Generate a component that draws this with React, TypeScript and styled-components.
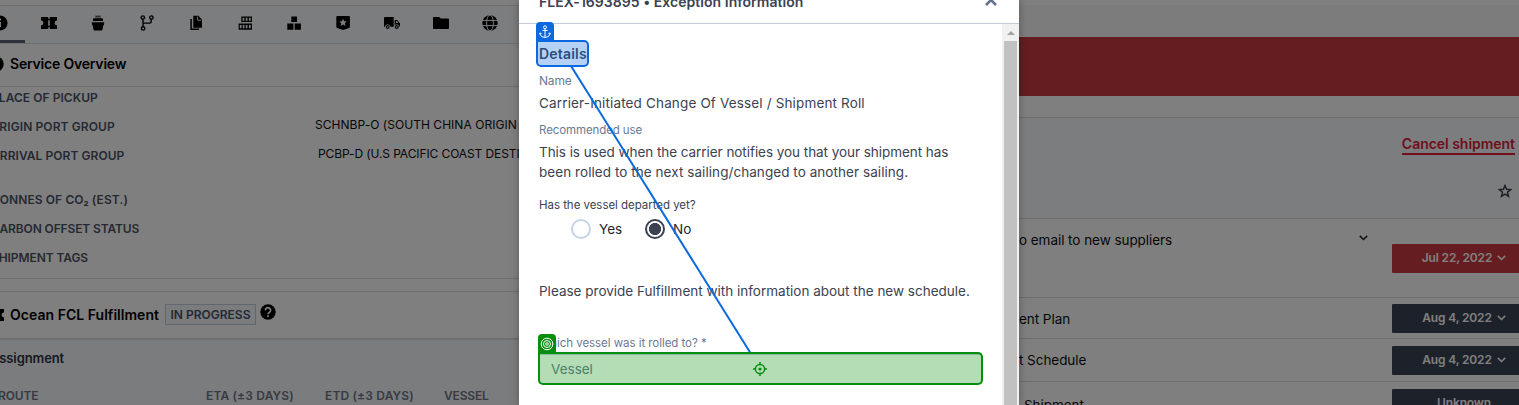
import React from "react";
import styled, { createGlobalStyle } from "styled-components";

const Global = createGlobalStyle`
  * { box-sizing: border-box; }
  body { margin: 0; overflow: hidden; background: #fff; }
`;

const Page = styled.div`
  position: relative;
  display: flex;
  justify-content: space-between;
  width: 1519px;
  height: 405px;
  overflow: hidden;
  background: #fff;
  font-family: Inter, "Liberation Sans", sans-serif;
  color: #0b0d12;
`;

/* Text run: size, weight, tracking and colour vary by use */
const Text = styled.span<{ $size?: number; $weight?: number; $track?: number; $color?: string }>`
  font-size: ${(p) => p.$size ?? 13.5}px;
  font-weight: ${(p) => p.$weight ?? 400};
  letter-spacing: ${(p) => p.$track ?? 0}px;
  color: ${(p) => p.$color ?? "inherit"};
  white-space: nowrap;
`;

const LeftPanel = styled.section`
  width: 519px;
  height: 405px;
  overflow: hidden;
  display: flex;
  flex-direction: column;
`;

const Tabs = styled.nav`
  margin-top: 5px;
  height: 39px;
  flex: none;
  display: flex;
  background: #f9fafd;
  border-top: 1px solid #dcdddf;
  border-bottom: 1px solid #dcdddf;
`;

const Tab = styled.div<{ $active?: boolean }>`
  width: 49px;
  flex: none;
  display: flex;
  justify-content: center;
  padding: 9px 2px 0 0;
  border-bottom: ${(p) => (p.$active ? "3px solid #5b6477" : "0")};
  color: #000;
  &:first-child { margin-left: -24px; }
`;

const SectionHead = styled.header<{ $height: number; $lift?: number }>`
  height: ${(p) => p.$height}px;
  flex: none;
  display: flex;
  align-items: center;
  padding-bottom: ${(p) => p.$lift ?? 0}px;
  border-bottom: 1px solid #dcdddf;
  color: #000;
`;

const HeadIcon = styled.span`
  width: 10px;
  display: flex;
  justify-content: flex-end;
  padding-right: 6px;
  flex: none;
  svg { flex: none; }
`;

const Facts = styled.div`
  height: 192px;
  flex: none;
  border-bottom: 1px solid #dcdddf;
`;

const Fact = styled.div<{ $height?: number; $indent: number }>`
  display: flex;
  height: ${(p) => p.$height ?? 29}px;
  line-height: 18px;
  margin-left: ${(p) => -p.$indent}px;
`;

const FactLabel = styled.div<{ $width: number }>`
  width: ${(p) => p.$width}px;
  flex: none;
  white-space: nowrap;
`;

const FactValue = styled.div`
  white-space: nowrap;
  margin-top: -2px;
`;

const Gap = styled.div`
  height: 12px;
  flex: none;
  border-bottom: 1px solid #dcdddf;
  box-sizing: content-box;
`;

const Badge = styled.span`
  display: flex;
  align-items: center;
  justify-content: center;
  width: 91px;
  height: 21px;
  margin: 0 4px 0 6px;
  border: 1px solid #c3cfdf;
  background: #f6f8fb;
`;

const HelpSlot = styled.span`
  line-height: 0;
  margin-top: -6px;
`;

const Assignment = styled.div`
  flex: 1;
  background: #f6f8fc;
  border-top: 1px solid #dcdfe6;
  line-height: 20px;
`;

const AssignTitle = styled.div`
  padding-top: 7px;
  margin-left: -10px;
  height: 46px;
`;

const Columns = styled.div`
  display: grid;
  grid-template-columns: 208px 119px 119px auto;
  margin-left: -2px;
`;

const RightPanel = styled.section`
  width: 500px;
  height: 405px;
  display: flex;
  flex-direction: column;
`;

const TopStrip = styled.div`
  height: 37px;
  flex: none;
  background: linear-gradient(#fff 5px, #f9f9f9 5px);
`;

const Alert = styled.div`
  height: 59px;
  flex: none;
  background: #cb3b42;
`;

const Actions = styled.div`
  margin-top: 21px;
  height: 102px;
  flex: none;
  display: flex;
  flex-direction: column;
  align-items: flex-end;
  padding: 16px 4px 0 0;
  background: #f9fafd;
  border-top: 1px solid #dcdddf;
  border-bottom: 1px solid #dcdddf;
`;

const Cancel = styled.a`
  height: 21px;
  line-height: 19px;
  border-bottom: 2px solid #e0213a;
  color: #e0213a;
`;

const StarSlot = styled.div`
  margin: 29px 3px 0 0;
  height: 14px;
  line-height: 0;
`;

const Task = styled.div<{ $height: number }>`
  height: ${(p) => p.$height}px;
  flex: none;
  display: flex;
  border-bottom: 1px solid #dcdddf;
`;

const TaskName = styled.div<{ $indent?: number; $top: number }>`
  width: 340px;
  flex: none;
  padding: ${(p) => p.$top}px 0 0 ${(p) => p.$indent ?? 0}px;
  line-height: 20px;
`;

const Toggle = styled.div`
  width: 33px;
  flex: none;
  padding-top: 16px;
  line-height: 0;
`;

const DateButton = styled.button<{ $late?: boolean; $top: number }>`
  width: 143px;
  height: 29px;
  flex: none;
  margin: ${(p) => p.$top}px 0 0 auto;
  border: 0;
  border-radius: 1px;
  padding: 0 0 2px 1px;
  display: flex;
  align-items: center;
  justify-content: center;
  gap: 5px;
  background: ${(p) => (p.$late ? "#cb3b42" : "#3b4252")};
  color: #fff;
  font-family: inherit;
`;

const TaskList = styled.div`
  width: 516px;
  flex: none;
`;

const Overlay = styled.div`
  position: absolute;
  inset: 0;
  background: rgba(0, 0, 0, 0.5);
`;

const Modal = styled.div`
  position: absolute;
  left: 519px;
  top: 0;
  width: 500px;
  height: 405px;
  display: flex;
  flex-direction: column;
  background: #fff;
  color: #3b4252;
  box-shadow: 0 0 8px rgba(0, 0, 0, 0.3);
`;

const ModalHead = styled.header`
  height: 24px;
  flex: none;
  display: flex;
  justify-content: space-between;
  border-bottom: 1px solid #c2cdda;
  padding: 0 22px 0 20px;
  line-height: 20px;
`;

const Raised = styled.div`
  margin-top: -9px;
  line-height: 20px;
`;

const CloseSlot = styled.div`
  margin-top: -6px;
  line-height: 0;
`;

const ModalMain = styled.div`
  flex: 1;
  display: flex;
  justify-content: space-between;
`;

const Form = styled.div`
  width: 463px;
  padding: 19px 0 0 20px;
`;

const Line = styled.div<{ $top: number; $height?: number }>`
  margin-top: ${(p) => p.$top}px;
  height: ${(p) => p.$height ?? 20}px;
  line-height: ${(p) => p.$height ?? 20}px;
  white-space: nowrap;
`;

const Radios = styled.div`
  display: flex;
  align-items: center;
  margin: 7px 0 0 32px;
  height: 20px;
`;

const Radio = styled.span<{ $on?: boolean }>`
  width: 20px;
  height: 20px;
  margin-right: 8px;
  border-radius: 50%;
  border: 2px solid ${(p) => (p.$on ? "#3b4252" : "#c7d3e8")};
  background: ${(p) => (p.$on ? "radial-gradient(circle, #3b4252 5.7px, #fff 6.4px)" : "#fff")};
`;

const RadioLabel = styled.label`
  width: 46px;
  line-height: 20px;
  margin-top: -2px;
  color: #23272f;
`;

const Field = styled.div`
  margin-top: 3px;
  height: 31px;
  width: 443px;
  border: 1px solid #c2cdda;
  border-top-width: 2px;
  padding-left: 11px;
  line-height: 27px;
`;

const Scrollbar = styled.div`
  width: 17px;
  background: #f1f1f1;
  display: flex;
  flex-direction: column;
  align-items: center;
`;

const Arrow = styled.div`
  margin: 7px 0 6px;
  border: 4px solid transparent;
  border-top: 0;
  border-bottom: 4px solid #a3a3a3;
`;

const Thumb = styled.div`
  flex: 1;
  width: 13px;
  background: #c1c1c1;
`;

const Highlight = styled.div<{ $x: number; $y: number; $w: number; $h: number; $tone: string; $fill: string }>`
  position: absolute;
  left: ${(p) => p.$x}px;
  top: ${(p) => p.$y}px;
  width: ${(p) => p.$w}px;
  height: ${(p) => p.$h}px;
  border: 2px solid ${(p) => p.$tone};
  border-radius: 0 5px 5px 5px;
  background: ${(p) => p.$fill};
  display: flex;
  align-items: center;
  justify-content: center;
`;

const Tag = styled.div<{ $tone: string }>`
  position: absolute;
  left: -2px;
  top: -20px;
  width: 18px;
  height: 19px;
  border-radius: 4px 4px 0 0;
  background: ${(p) => p.$tone};
  display: flex;
  align-items: center;
  justify-content: center;
`;

const Connector = styled.svg`
  position: absolute;
  inset: 0;
`;

const Svg = ({ children, size = 16 }: { children: React.ReactNode; size?: number }) => (
  <svg width={size} height={size} viewBox="0 0 16 16" fill="currentColor">{children}</svg>
);

const InfoIcon = () => (
  <Svg>
    <circle cx="8" cy="8" r="7.6" />
    <path d="M7 3.6h2v2H7zM7 7h2v5.2H7z" fill="#f9fafd" />
  </Svg>
);

const TicketIcon = () => (
  <Svg>
    <path d="M0 2h16v3.600a2.400 2.400 0 0 0 0 4.800V14H0v-3.600a2.400 2.400 0 0 0 0-4.800z" />
    <path d="M7.200 2h1.600v1.800H7.200zM7.200 5.200h1.600v5.600H7.200zM7.200 12.200h1.600V14H7.200z" fill="#f9fafd" />
  </Svg>
);

const ShipIcon = () => (
  <Svg>
    <path d="M5.3.6h5.4v2H5.300z" opacity=".6" />
    <path d="M3.8 3.2h8.4a.8.8 0 0 1 .8.8v2H3V4a.8.8 0 0 1 .8-.8zM1.700 7.200h12.600l-.4 2.400a1 1 0 0 1-.6.8l-.7 3.800a1.600 1.600 0 0 1-1.600 1.400H5a1.600 1.600 0 0 1-1.600-1.400l-.7-3.800a1 1 0 0 1-.6-.8z" />
  </Svg>
);

const BranchIcon = () => (
  <Svg>
    <g fill="none" stroke="currentColor" strokeWidth="1.4">
      <circle cx="3.8" cy="2.6" r="1.7" />
      <circle cx="12.4" cy="2.6" r="1.7" />
      <circle cx="4.1" cy="13.4" r="1.7" />
      <path d="M4 4.300v7.400M12.200 4.300v2.300q0 1.500-1.500 1.500H4" />
    </g>
  </Svg>
);

const CopyIcon = () => (
  <Svg>
    <path d="M2.300 4h1.500v9.600H11V15H2.300z" />
    <path d="M5.300.8h5L14 4.500v8.200H5.300z" />
    <path d="M9.600 1.600v3.600h3.600" fill="none" stroke="#f9fafd" strokeWidth=".9" />
  </Svg>
);

const ContainersIcon = () => (
  <Svg>
    <path fillRule="evenodd" d="M4.300 1.400H15V7H4.300zM5.600 2.700v3h1.700v-3zM8.700 2.700v3h1.800v-3zM11.900 2.700v3h1.800v-3zM1.600 8.500H15v6.200H1.600zM2.800 9.900v3.300h1.800V9.900zM5.800 9.900v3.300h1.700V9.900zM8.800 9.900v3.300h1.700V9.900zM11.900 9.900v3.300h1.800V9.900z" />
  </Svg>
);

const BoxesIcon = () => (
  <Svg><path d="M5.300 1.600H11V7H5.300zM1.300 8.500h6.100v6.200H1.300zM8.700 8.500h6.200v6.200H8.700z" /></Svg>
);

const ShieldIcon = () => (
  <Svg>
    <path d="M2.300 1h11.600q1 0 1 1v9.800q0 .8-.8 1.100L8.100 15l-6-2.100q-.8-.3-.8-1.100V2q0-1 1-1z" />
    <path d="m8.100 3.700 1.100 2.500 2.700.3-2 1.800.6 2.700-2.400-1.400L5.700 11l.6-2.700-2-1.800 2.700-.3z" fill="#f9fafd" />
  </Svg>
);

const TruckIcon = () => (
  <Svg>
    <path d="M1 2h8.700v9.800H0V3a1 1 0 0 1 1-1zM10.700 5h2.600L16 8.400v3.400h-5.300z" />
    <circle cx="3.700" cy="12" r="2.300" stroke="#f9fafd" strokeWidth=".8" />
    <circle cx="12.800" cy="12" r="2.300" stroke="#f9fafd" strokeWidth=".8" />
    <circle cx="3.700" cy="12" r=".8" fill="#f9fafd" />
    <circle cx="12.800" cy="12" r=".8" fill="#f9fafd" />
    <path d="M12 6.100h1l1.400 1.900H12z" fill="#f9fafd" />
  </Svg>
);

const FolderIcon = () => (
  <Svg><path d="M.8 2h5.400l1.600 1.600h7.400q.8 0 .8.800v8.800q0 .8-.8.800H.8q-.8 0-.8-.8V2.800Q0 2 .8 2z" /></Svg>
);

const GlobeIcon = () => (
  <Svg>
    <circle cx="8" cy="8" r="7.700" />
    <g fill="none" stroke="#f9fafd" strokeWidth="1">
      <ellipse cx="8" cy="8" rx="3.400" ry="8" />
      <path d="M0 5.400h16M0 10.600h16" />
    </g>
  </Svg>
);

const HelpIcon = () => (
  <Svg>
    <circle cx="8" cy="8" r="7.700" />
    <path d="M5.400 6.300a2.600 2.600 0 1 1 4 2.100C8.400 9 8 9.300 8 10.200M8 11.300v1.700" fill="none" stroke="#fff" strokeWidth="1.700" />
  </Svg>
);

const StarIcon = () => (
  <svg width="14" height="14" viewBox="0 0 14 14" fill="none" stroke="#3b4252" strokeWidth="1.500">
    <path d="m7 1.600 1.600 3.700 4 .3-3.100 2.700 1 4L7 10.100l-3.500 2.200 1-4L1.400 5.600l4-.3z" />
  </svg>
);

const Chevron = ({ color = "currentColor" }: { color?: string }) => (
  <svg width="9" height="6" viewBox="0 0 9 6" fill="none" stroke={color} strokeWidth="1.600">
    <path d="M.8.900 4.500 4.500 8.200.900" />
  </svg>
);

const AnchorIcon = () => (
  <svg width="12" height="14" viewBox="0 0 12 14" fill="none" stroke="#fff" strokeWidth="1">
    <circle cx="6" cy="2.300" r="1.500" />
    <path d="M6 3.800v8.700M3.500 5.500h5M1.200 8v1.200Q1.700 12.300 6 12.500q4.300-.2 4.800-3.300V8M.4 9.300l.9-1.500 1.200 1.200M11.600 9.300l-.9-1.500L9.500 9" />
  </svg>
);

const TargetIcon = () => (
  <svg width="14" height="14" viewBox="0 0 14 14" fill="none" stroke="#fff" strokeWidth="1">
    <circle cx="7" cy="7" r="5.800" />
    <circle cx="7" cy="7" r="3.500" />
    <circle cx="7" cy="7" r="1.300" />
  </svg>
);

const CrosshairIcon = () => (
  <svg width="14" height="14" viewBox="0 0 14 14" fill="none" stroke="#068f0e" strokeWidth="1.500">
    <circle cx="7" cy="7" r="4.600" />
    <circle cx="7" cy="7" r="1.600" fill="#068f0e" stroke="none" />
    <path d="M7 0v2.600M7 11.400V14M0 7h2.600M11.400 7H14" />
  </svg>
);

const CrosshairSlot = styled.span`
  line-height: 0;
  margin-right: 2px;
`;

const tabIcons = [InfoIcon, TicketIcon, ShipIcon, BranchIcon, CopyIcon, ContainersIcon, BoxesIcon, ShieldIcon, TruckIcon, FolderIcon, GlobeIcon];

const facts = [
  { label: "PLACE OF PICKUP", indent: 9, track: 0.05 },
  { label: "ORIGIN PORT GROUP", indent: 10, track: 0.1, value: "SCHNBP-O (SOUTH CHINA ORIGIN", at: 315, valueTrack: 0.04 },
  { label: "ARRIVAL PORT GROUP", indent: 9, track: 0.05, value: "PCBP-D (U.S PACIFIC COAST DESTI", at: 318, valueTrack: -0.1, height: 44 },
  { label: "TONNES OF CO₂ (EST.)", indent: 8, track: 0.1 },
  { label: "CARBON OFFSET STATUS", indent: 9, track: -0.12 },
  { label: "SHIPMENT TAGS", indent: 9, track: -0.08 },
];

const tasks = [
  { name: "o email to new suppliers", height: 79, top: 10, date: "Jul 22, 2022", btn: 25, late: true, toggle: true },
  { name: "ent Plan", height: 41, top: 10, date: "Aug 4, 2022", btn: 6 },
  { name: "t Schedule", height: 43, top: 10, date: "Aug 4, 2022", btn: 7 },
  { name: "Shipment", height: 43, top: 12, date: "Unknown", btn: 7, indent: 5 },
];

const BLUE = "#0a69e0";
const GREEN = "#068f0e";

export default function App() {
  return (
    <>
      <Global />
      <Page>
        <LeftPanel>
          <Tabs>
            {tabIcons.map((Icon, i) => (
              <Tab key={i} $active={i === 0}><Icon /></Tab>
            ))}
          </Tabs>
          <SectionHead $height={43} $lift={3}>
            <HeadIcon><Svg><circle cx="8" cy="8" r="7.700" /></Svg></HeadIcon>
            <Text $size={14} $weight={600} $track={-0.2}>Service Overview</Text>
          </SectionHead>
          <Facts>
            {facts.map((f) => (
              <Fact key={f.label} $indent={f.indent} $height={f.height}>
                <FactLabel $width={f.indent + (f.at ?? 300)}>
                  <Text $size={12} $weight={600} $track={f.track} $color="#4b5366">{f.label}</Text>
                </FactLabel>
                {f.value && <FactValue><Text $size={12} $track={f.valueTrack}>{f.value}</Text></FactValue>}
              </Fact>
            ))}
          </Facts>
          <Gap />
          <SectionHead $height={47} $lift={1}>
            <HeadIcon><TicketIcon /></HeadIcon>
            <Text $size={14} $weight={600} $track={0.03}>Ocean FCL Fulfillment</Text>
            <Badge><Text $size={12} $weight={600} $color="#4b5366">IN PROGRESS</Text></Badge>
            <HelpSlot><HelpIcon /></HelpSlot>
          </SectionHead>
          <Assignment>
            <AssignTitle><Text $size={13} $weight={600} $track={-0.1} $color="#2e3440">Assignment</Text></AssignTitle>
            <Columns>
              {["ROUTE", "ETA (±3 DAYS)", "ETD (±3 DAYS)", "VESSEL"].map((c, i) => (
                <Text key={c} $size={12} $weight={600} $track={i % 3 ? 0.15 : -0.15} $color="#6e7687">{c}</Text>
              ))}
            </Columns>
          </Assignment>
        </LeftPanel>

        <RightPanel>
          <TopStrip />
          <Alert />
          <Actions>
            <Cancel><Text $size={14} $weight={600} $track={-0.03}>Cancel shipment</Text></Cancel>
            <StarSlot><StarIcon /></StarSlot>
          </Actions>
          <TaskList>
            {tasks.map((t, i) => (
              <Task key={i} $height={t.height}>
                <TaskName $top={t.top} $indent={t.indent}><Text $track={-0.05}>{t.name}</Text></TaskName>
                {t.toggle && <Toggle><Chevron color="#20242c" /></Toggle>}
                <DateButton $late={t.late} $top={t.btn}>
                  <Text $size={12} $weight={600} $track={-0.15}>{t.date}</Text>
                  {t.date !== "Unknown" && <Chevron />}
                </DateButton>
              </Task>
            ))}
          </TaskList>
        </RightPanel>

        <Overlay />

        <Modal>
          <ModalHead>
            <Raised><Text $size={14} $weight={600} $track={0.04}>FLEX-1693895 • Exception Information</Text></Raised>
            <CloseSlot>
              <svg width="12" height="12" viewBox="0 0 12 12" stroke="#64748f" strokeWidth="2.600">
                <path d="m1 1 10 10M11 1 1 11" />
              </svg>
            </CloseSlot>
          </ModalHead>
          <ModalMain>
            <Form>
              <Line $top={0}><Text $size={14} $weight={600} $track={0.2}>Details</Text></Line>
              <Line $top={7} $height={18}><Text $size={12} $track={-0.2} $color="#6b7a95">Name</Text></Line>
              <Line $top={4}><Text $track={0.15}>Carrier-Initiated Change Of Vessel / Shipment Roll</Text></Line>
              <Line $top={7} $height={18}><Text $size={11.5} $track={-0.1} $color="#6b7a95">Recommended use</Text></Line>
              <Line $top={4}><Text $track={-0.05}>This is used when the carrier notifies you that your shipment has</Text></Line>
              <Line $top={0}><Text $track={0.06}>been rolled to the next sailing/changed to another sailing.</Text></Line>
              <Line $top={13} $height={18}><Text $size={11.5} $track={-0.04}>Has the vessel departed yet?</Text></Line>
              <Radios>
                <Radio /><RadioLabel><Text>Yes</Text></RadioLabel>
                <Radio $on /><RadioLabel><Text>No</Text></RadioLabel>
              </Radios>
              <Line $top={41}><Text>Please provide Fulfillment with information about the new schedule.</Text></Line>
              <Line $top={32} $height={18}><Text $size={11.5} $track={-0.05} $color="#6b7a95">Which vessel was it rolled to? *</Text></Line>
              <Field><Text $color="#6b7a95">Vessel</Text></Field>
            </Form>
            <Scrollbar><Arrow /><Thumb /></Scrollbar>
          </ModalMain>
        </Modal>

        <Connector width="1519" height="405" viewBox="0 0 1519 405">
          <path d="M571 66 750.500 353" stroke={BLUE} strokeWidth="2" />
        </Connector>
        <Highlight $x={536} $y={40} $w={53} $h={27} $tone={BLUE} $fill="rgba(10,105,224,0.3)">
          <Tag $tone={BLUE}><AnchorIcon /></Tag>
        </Highlight>
        <Highlight $x={538} $y={352} $w={445} $h={33} $tone={GREEN} $fill="rgba(6,143,14,0.3)">
          <Tag $tone={GREEN}><TargetIcon /></Tag>
          <CrosshairSlot><CrosshairIcon /></CrosshairSlot>
        </Highlight>
      </Page>
    </>
  );
}
